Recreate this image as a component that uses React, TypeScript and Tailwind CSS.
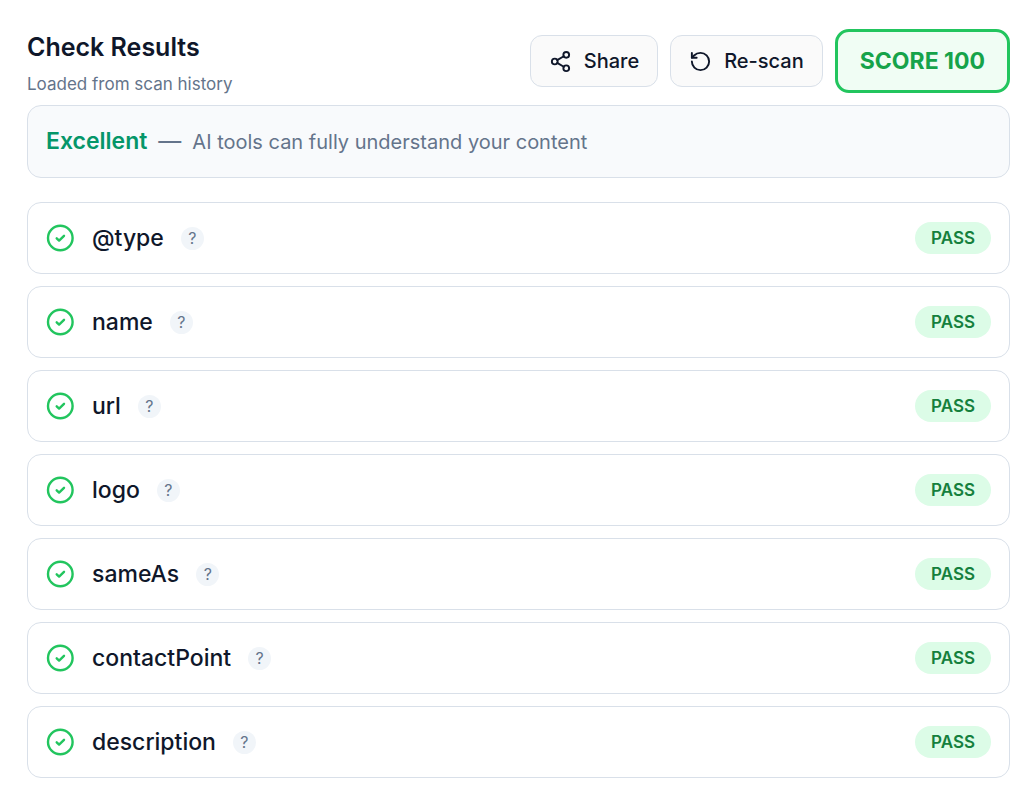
import { RotateCcw, Share2 } from "lucide-react";

const FIELDS = ["@type", "name", "url", "logo", "sameAs", "contactPoint", "description"];

function PassIcon() {
  return (
    <svg
      viewBox="0 0 28 28"
      className="size-7 shrink-0 text-[#22c55e]"
      fill="none"
      stroke="currentColor"
      strokeWidth="2.4"
      strokeLinecap="round"
      strokeLinejoin="round"
      aria-hidden="true"
    >
      <circle cx="14.3" cy="14" r="12.3" />
      <path d="M10.7 14.3l2.4 2.3 4.9-4.8" />
    </svg>
  );
}

function CheckRow({ field }: { field: string }) {
  return (
    <li className="flex h-[72px] items-center rounded-[14px] border border-[#d9e0e9] bg-white px-[18px]">
      <PassIcon />
      <span className="ml-[18px] text-[23px] leading-8 font-medium text-[#0f172a]">{field}</span>
      <button
        type="button"
        aria-label={`About ${field}`}
        className="ml-[17px] flex size-[23px] items-center justify-center rounded-full bg-[#f1f5f9] text-[16px] leading-none text-[#64748b]"
      >
        ?
      </button>
      <span className="ml-auto rounded-full bg-[#dcfce7] px-4 text-[17px] leading-8 font-semibold text-[#15803d]">
        PASS
      </span>
    </li>
  );
}

export default function App() {
  return (
    <main className="bg-white pt-[29px] pr-[14px] pb-1 pl-[27px] font-['Inter',sans-serif] text-[#0f172a]">
      <header className="flex items-start justify-between">
        <div>
          <h2 className="text-[25px] leading-9 font-semibold">Check Results</h2>
          <p className="mt-[7px] text-[17px] leading-6 text-[#64748b]">Loaded from scan history</p>
        </div>
        <div className="flex items-center gap-3">
          <button
            type="button"
            className="flex h-[52px] items-center gap-3 rounded-xl border border-[#d9e0e9] bg-[#fafafa] px-[18px] text-[20px] font-medium"
          >
            <Share2 className="size-[23px]" />
            Share
          </button>
          <button
            type="button"
            className="flex h-[52px] items-center gap-3 rounded-xl border border-[#d9e0e9] bg-[#fafafa] px-[18px] text-[20px] font-medium"
          >
            <RotateCcw className="size-[23px]" />
            Re-scan
          </button>
          <div className="flex h-16 items-center rounded-[14px] border-3 border-[#22c55e] bg-[#f0fdf4] px-[22px] text-[23px] font-bold text-[#16a34a]">
            SCORE 100
          </div>
        </div>
      </header>

      <section className="mt-[9px] flex h-[73px] items-center gap-[11px] rounded-[14px] border border-[#d9e0e9] bg-[#f8fafc] px-[18px] text-[#64748b]">
        <strong className="text-[23px] font-semibold text-[#059669]">Excellent</strong>
        <span className="text-[23px]">—</span>
        <p className="text-[20px]">AI tools can fully understand your content</p>
      </section>

      <ul className="mt-6 grid gap-3">
        {FIELDS.map((field) => (
          <CheckRow key={field} field={field} />
        ))}
      </ul>
    </main>
  );
}
